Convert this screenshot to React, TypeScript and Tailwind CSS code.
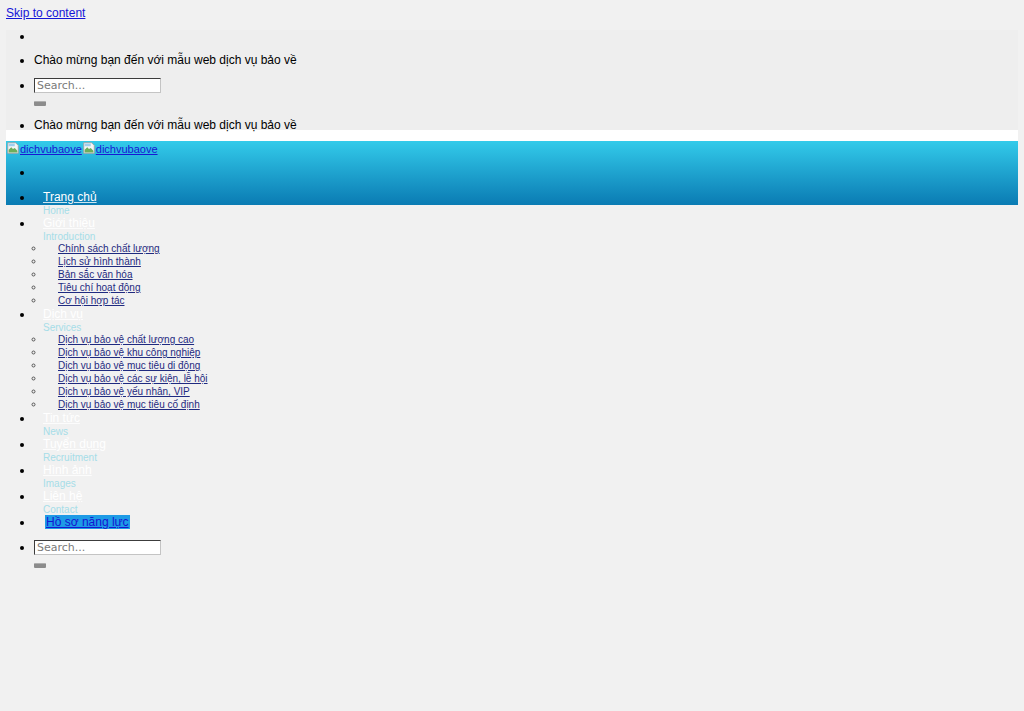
import React from 'react';

const welcome = 'Chào mừng bạn đến với mẫu web dịch vụ bảo về';

type MenuItem = {
    title: string;
    subtitle: string;
    children?: string[];
};

const menu: MenuItem[] = [
    { title: 'Trang chủ', subtitle: 'Home' },
    {
        title: 'Giới thiệu',
        subtitle: 'Introduction',
        children: ['Chính sách chất lượng', 'Lịch sử hình thành', 'Bản sắc văn hóa', 'Tiêu chí hoạt động', 'Cơ hội hợp tác'],
    },
    {
        title: 'Dịch vụ',
        subtitle: 'Services',
        children: [
            'Dịch vụ bảo vệ chất lượng cao',
            'Dịch vụ bảo vệ khu công nghiệp',
            'Dịch vụ bảo vệ mục tiêu di động',
            'Dịch vụ bảo vệ các sự kiện, lễ hội',
            'Dịch vụ bảo vệ yếu nhân, VIP',
            'Dịch vụ bảo vệ mục tiêu cố định',
        ],
    },
    { title: 'Tin tức', subtitle: 'News' },
    { title: 'Tuyển dụng', subtitle: 'Recruitment' },
    { title: 'Hình ảnh', subtitle: 'Images' },
    { title: 'Liên hệ', subtitle: 'Contact' },
];

// placeholder glyph a browser shows for an image that failed to load
const BrokenImage: React.FC = () => (
    <svg width="14" height="14" viewBox="0 0 16 16" className="inline-block align-[-2px]">
        <path d="M2 2h9l3 3v9H2z" fill="#f6f6f6" stroke="#a0a0a0" strokeWidth="1" />
        <path d="M3 10l3-3 2 2 2-1 3 3v2H3z" fill="#6cae5c" />
        <rect x="3" y="3" width="7" height="3" fill="#9fcfee" />
    </svg>
);

const SearchBox: React.FC = () => (
    <div>
        <input
            type="search"
            placeholder="Search..."
            className="block w-[127px] h-[15px] px-[2px] border border-[#3c3c3c] border-r-[#c4c4c4] border-b-[#c4c4c4] bg-white text-[11px] leading-[13px] font-['DejaVu_Sans',sans-serif] placeholder:text-[#7a7a7a] outline-none"
        />
        <button type="button" className="block mt-[8px] w-[12px] h-[5px] rounded-[1px] bg-[#8c8c8c] border-t border-[#b0b0b0]" />
    </div>
);

export default function App() {
    return (
        <div className="min-h-screen bg-[#f1f1f1] font-['Liberation_Sans',Arial,sans-serif] text-[12px] leading-[14px] text-[#222]">
            <div className="h-[30px] px-[6px] pt-[6px]">
                <a href="#content" className="text-[12px] text-[#1515d8] underline">
                    Skip to content
                </a>
            </div>

            <div className="mx-[6px]">
                {/* top bar */}
                <div className="h-[100px] bg-[#eeeeee]">
                    <ul className="list-disc pl-[28px] text-black">
                        <li className="h-[13px] leading-[13px]"></li>
                        <li className="mt-[10px]">{welcome}</li>
                        <li className="mt-[11px]">
                            <SearchBox />
                        </li>
                        <li className="mt-[12px]">{welcome}</li>
                    </ul>
                </div>
                <div className="h-[11px] bg-white" />

                {/* header */}
                <header className="h-[64px] bg-gradient-to-b from-[#33cbea] to-[#0a7bb3]">
                    <div className="h-[14px] text-[11px]">
                        <a href="#" className="text-[#1717d4] underline">
                            <BrokenImage />
                            dichvubaove
                        </a>
                        <a href="#" className="text-[#1717d4] underline">
                            <BrokenImage />
                            dichvubaove
                        </a>
                    </div>
                    <ul className="list-disc pl-[28px] text-black mt-[10px]">
                        <li className="h-[14px] mb-[11px]"></li>
                        {menu.map((item) => (
                            <li key={item.title} className="leading-[15px]">
                                <a href="#" className="block pl-[9px] text-white underline decoration-white/80">
                                    {item.title}
                                </a>
                                <span className="block pl-[9px] text-[10px] leading-[11px] text-[#a6dde8]">{item.subtitle}</span>
                                {item.children && (
                                    <ul className="list-[circle] pl-[11px] text-[#555]">
                                        {item.children.map((child) => (
                                            <li key={child} className="text-[10px] leading-[13px]">
                                                <a href="#" className="pl-[13px] text-[#1f2a80] underline">
                                                    {child}
                                                </a>
                                            </li>
                                        ))}
                                    </ul>
                                )}
                            </li>
                        ))}
                        <li>
                            <a href="#" className="ml-[11px] px-[1px] bg-[#1e9be6] text-[#1616d0] underline">
                                Hồ sơ năng lực
                            </a>
                        </li>
                    </ul>
                    <ul className="list-disc pl-[28px] text-black mt-[11px]">
                        <li>
                            <SearchBox />
                        </li>
                    </ul>
                </header>
            </div>
        </div>
    );
}
